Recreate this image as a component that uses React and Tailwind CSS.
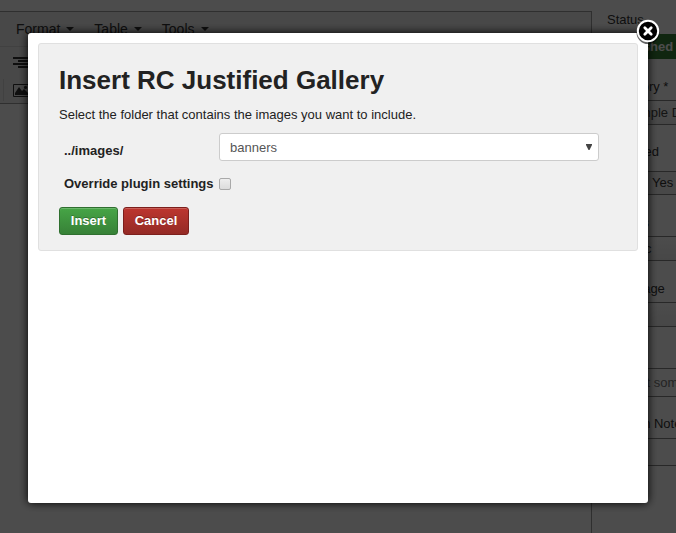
import React from "react";

const MENUS = ["Format", "Table", "Tools"];

function Caret() {
  return (
    <svg width="8" height="4" viewBox="0 0 8 4" aria-hidden="true">
      <path d="M0 0h8L4 4z" fill="#333" />
    </svg>
  );
}

function Editor() {
  return (
    <main className="mt-[11px] flex min-w-0 flex-1 flex-col border-t border-r border-[#9e9e9e] bg-white">
      <nav className="flex h-[35px] items-center border-b border-[#d9d9d9] bg-[#f0f0f0] pl-4 text-sm text-[#333]">
        {MENUS.map((name) => (
          <button key={name} type="button" className="mr-5 flex items-center gap-[6px]">
            {name}
            <Caret />
          </button>
        ))}
      </nav>
      <div className="flex h-[57px] flex-col border-b border-[#9e9e9e] bg-[#f0f0f0]">
        <div className="flex h-8 items-center pl-[13px]">
          <button type="button" aria-label="Align right">
            <svg className="block" width="16" height="12" viewBox="0 0 16 12" fill="#333">
              <path d="M0 0h16v2H0zM5 3h11v2H5zM0 6h16v2H0zM5 9h11v2H5z" />
            </svg>
          </button>
        </div>
        <div className="ml-[3px] flex h-[22px] items-center border-l border-[#d9d9d9] pl-[9px]">
          <button type="button" aria-label="Insert image">
            <svg className="block" width="17" height="13" viewBox="0 0 17 13">
              <path d="M.5.5h16v12H.5z" fill="none" stroke="#333" />
              <path d="M2 11V9l4-6 3 4 2-2 4 4v2z" fill="#333" />
              <circle cx="12.5" cy="3.4" r="1.6" fill="#333" />
            </svg>
          </button>
        </div>
      </div>
    </main>
  );
}

function Choice({ id, label, value, className }) {
  return (
    <div className={className}>
      <label htmlFor={id} className="block h-[22px] leading-[18px]">
        {label}
      </label>
      <select
        id={id}
        className="block h-[25px] w-[220px] appearance-none border border-[#888] bg-linear-to-b from-white to-[#eee] px-2 text-[13px] text-[#444]"
      >
        <option>{value}</option>
      </select>
    </div>
  );
}

function Sidebar() {
  return (
    <aside className="w-[84px] shrink-0 overflow-hidden pt-[11px] pl-[15px] text-[13px] whitespace-nowrap text-[#333]">
      <p className="h-[23px] leading-[18px]">Status</p>
      <button
        type="button"
        className="h-[25px] w-[220px] bg-[#378137] pl-1 text-left font-bold text-white"
      >
        Published
      </button>
      <Choice id="category" label="Category *" value="- Sample Data" className="mt-[19px]" />
      <fieldset className="mt-[18px]">
        <legend className="h-[28px] leading-[18px]">Featured</legend>
        <div className="flex h-[24px] w-[220px] border border-[#888] bg-[#f0f0f0]">
          <button type="button" className="w-[110px] pl-11 text-left">
            Yes
          </button>
          <button type="button" className="w-[110px]" aria-label="No" />
        </div>
      </fieldset>
      <Choice id="access" label="Access" value="Public" className="mt-[19px]" />
      <Choice id="language" label="Language" value="All" className="mt-[19px]" />
      <div className="mt-[19px]">
        <label htmlFor="tags" className="block h-[22px] leading-[18px]">
          Tags
        </label>
        <input
          id="tags"
          placeholder="Select some options"
          className="block h-[29px] w-[220px] border border-[#888] px-[6px] placeholder:text-[#777]"
        />
      </div>
      <div className="mt-[18px]">
        <label htmlFor="note" className="block h-[23px] leading-[18px]">
          Version Note
        </label>
        <input id="note" className="block h-[28px] w-[220px] border border-[#888] px-[6px]" />
      </div>
    </aside>
  );
}

function GalleryForm() {
  return (
    <form className="rounded-[3px] border border-[#e0e0e0] bg-[#f0f0f0] px-5 pt-[18px] pb-[15px] text-[13px] leading-[18px] text-[#222]">
      <h1 className="text-[26px] leading-9 font-bold">Insert RC Justified Gallery</h1>
      <p className="mt-2">Select the folder that contains the images you want to include.</p>
      <div className="mt-[9px] grid grid-cols-[155px_minmax(0,380px)] items-center pl-[5px]">
        <label htmlFor="folder" className="pt-2 font-bold">
          ../images/
        </label>
        <div className="relative">
          <select
            id="folder"
            className="block h-7 w-full appearance-none rounded-[3px] border border-[#ccc] bg-white px-[10px] pt-px text-[13px] text-[#555]"
          >
            <option>banners</option>
          </select>
          <svg
            className="pointer-events-none absolute top-[11px] right-[7px]"
            width="6"
            height="6"
            viewBox="0 0 6 6"
            aria-hidden="true"
          >
            <path d="M0 0h6v1L3.5 6h-1L0 1z" fill="#444" />
          </svg>
        </div>
      </div>
      <div className="mt-[14px] grid grid-cols-[155px_minmax(0,380px)] items-center pl-[5px]">
        <label htmlFor="override" className="font-bold whitespace-nowrap">
          Override plugin settings
        </label>
        <input
          id="override"
          type="checkbox"
          className="h-3 w-3 appearance-none rounded-[2px] border border-[#a9a9a9] bg-linear-to-b from-[#eee] to-[#dcdcdc]"
        />
      </div>
      <div className="mt-[14px] flex gap-[5px]">
        <button
          type="submit"
          className="h-7 w-[59px] rounded-[3px] border border-[#2f6f2f] bg-linear-to-b from-[#46a546] to-[#378137] font-bold text-white shadow-[inset_0_1px_0_rgba(255,255,255,0.2)] text-shadow-[0_-1px_0_rgba(0,0,0,0.25)]"
        >
          Insert
        </button>
        <button
          type="button"
          className="h-7 w-[66px] rounded-[3px] border border-[#7c1f1c] bg-linear-to-b from-[#bd362f] to-[#942a25] font-bold text-white shadow-[inset_0_1px_0_rgba(255,255,255,0.2)] text-shadow-[0_-1px_0_rgba(0,0,0,0.25)]"
        >
          Cancel
        </button>
      </div>
    </form>
  );
}

export default function App() {
  return (
    <div className="flex h-screen overflow-hidden bg-white font-['Liberation_Sans',Arial,sans-serif]">
      <Editor />
      <Sidebar />
      <div className="fixed inset-0 flex items-start justify-center bg-black/70 px-7 pt-[33px]">
        <div
          role="dialog"
          aria-label="Insert RC Justified Gallery"
          className="relative min-h-[470px] w-full max-w-[620px] rounded-[3px] bg-white p-[10px] shadow-[0_0_10px_#000]"
        >
          <GalleryForm />
          <button type="button" aria-label="Close" className="absolute -top-[15px] -right-[13px]">
            <svg width="26" height="27" viewBox="0 0 26 27">
              <circle cx="13" cy="14.5" r="11.5" fill="#000" opacity="0.6" />
              <circle cx="13" cy="13" r="10.2" fill="#000" stroke="#fff" strokeWidth="2" />
              <path
                d="M9.8 9.8l6.4 6.4M16.2 9.8l-6.4 6.4"
                stroke="#fff"
                strokeWidth="2.8"
                strokeLinecap="round"
              />
            </svg>
          </button>
        </div>
      </div>
    </div>
  );
}
